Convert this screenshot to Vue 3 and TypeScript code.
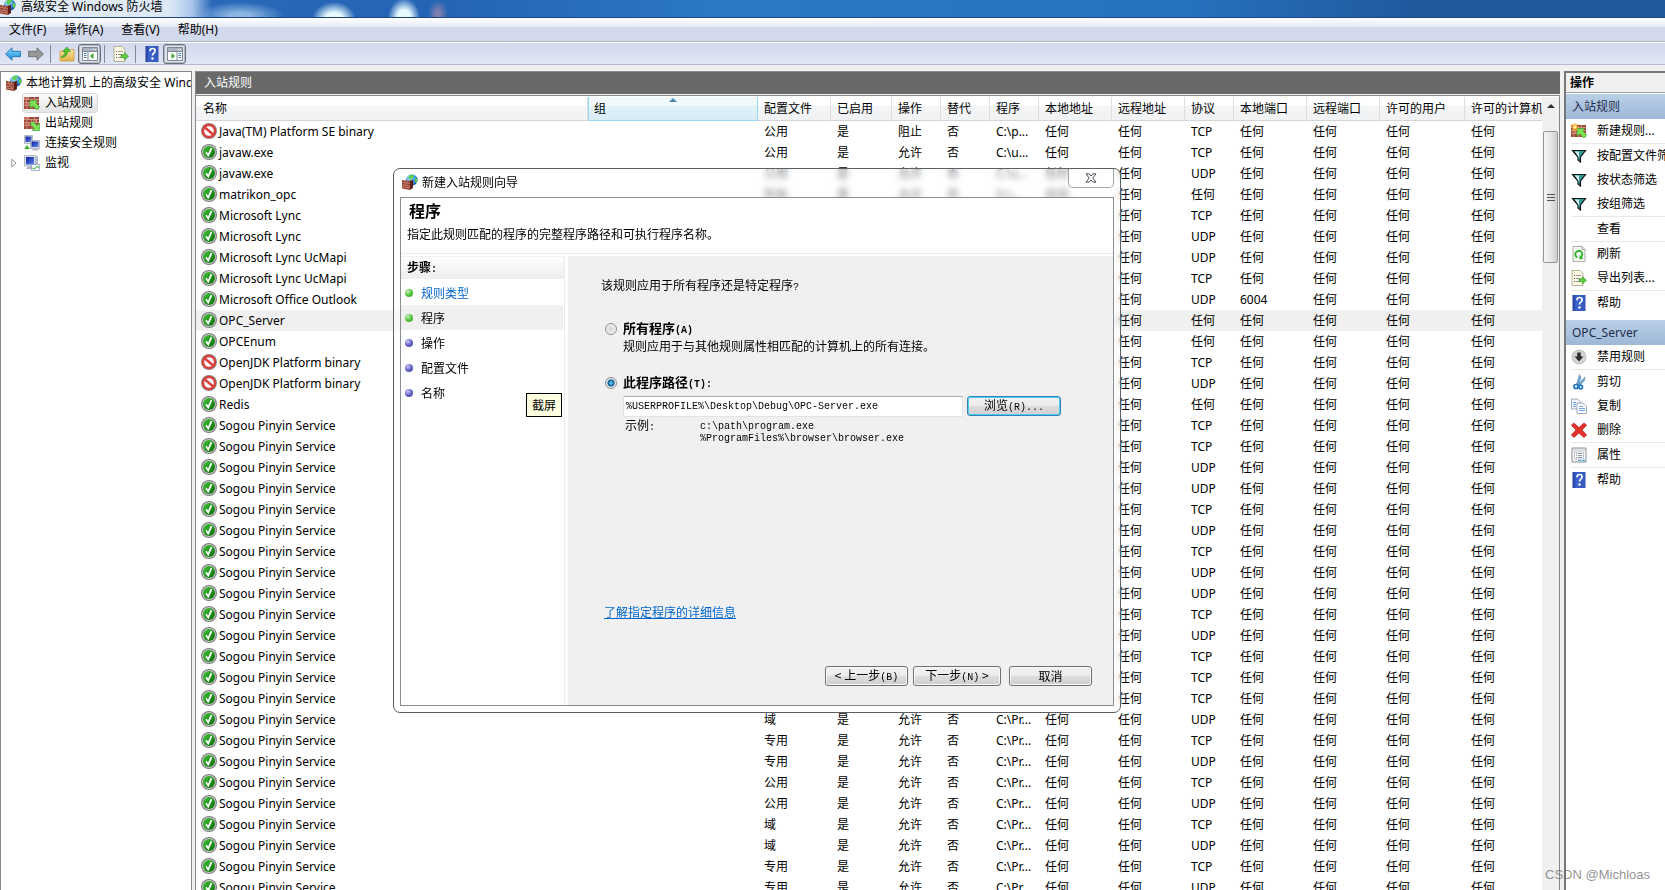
<script setup lang="ts">
import { ref } from 'vue'

interface Rule {
  name: string
  blocked?: boolean
  profile?: string
  action?: string
  program?: string
  protocol: string
  port?: string
}

const any = '任何'
const columns = [
  { label: '名称', cls: 'c-name' },
  { label: '组', cls: 'c-group' },
  { label: '配置文件', cls: 'c-73' },
  { label: '已启用', cls: 'c-61' },
  { label: '操作', cls: 'c-49' },
  { label: '替代', cls: 'c-49' },
  { label: '程序', cls: 'c-49' },
  { label: '本地地址', cls: 'c-73' },
  { label: '远程地址', cls: 'c-73' },
  { label: '协议', cls: 'c-49' },
  { label: '本地端口', cls: 'c-73' },
  { label: '远程端口', cls: 'c-73' },
  { label: '许可的用户', cls: 'c-85' },
  { label: '许可的计算机', cls: 'c-77' },
]

const sogou = (protocol: string, profile?: string): Rule => ({
  name: 'Sogou Pinyin Service',
  protocol,
  profile,
  action: profile ? '允许' : undefined,
  program: profile ? 'C:\\Pr...' : undefined,
})

const rules: Rule[] = [
  { name: 'Java(TM) Platform SE binary', blocked: true, profile: '公用', action: '阻止', program: 'C:\\p...', protocol: 'TCP' },
  { name: 'javaw.exe', profile: '公用', action: '允许', program: 'C:\\u...', protocol: 'TCP' },
  { name: 'javaw.exe', profile: '公用', action: '允许', program: 'C:\\u...', protocol: 'UDP' },
  { name: 'matrikon_opc', profile: '所有', action: '允许', program: 'D:\\...', protocol: any },
  { name: 'Microsoft Lync', protocol: 'TCP' },
  { name: 'Microsoft Lync', protocol: 'UDP' },
  { name: 'Microsoft Lync UcMapi', protocol: 'UDP' },
  { name: 'Microsoft Lync UcMapi', protocol: 'TCP' },
  { name: 'Microsoft Office Outlook', protocol: 'UDP', port: '6004' },
  { name: 'OPC_Server', protocol: any },
  { name: 'OPCEnum', protocol: any },
  { name: 'OpenJDK Platform binary', blocked: true, protocol: 'TCP' },
  { name: 'OpenJDK Platform binary', blocked: true, protocol: 'UDP' },
  { name: 'Redis', protocol: any },
  ...['TCP', 'TCP', 'UDP', 'UDP', 'TCP', 'UDP', 'TCP', 'UDP', 'UDP', 'TCP', 'UDP', 'TCP', 'TCP', 'TCP'].map((p) => sogou(p)),
  sogou('UDP', '域'),
  sogou('TCP', '专用'),
  sogou('UDP', '专用'),
  sogou('TCP', '公用'),
  sogou('UDP', '公用'),
  sogou('TCP', '域'),
  sogou('UDP', '域'),
  sogou('TCP', '专用'),
  sogou('UDP', '专用'),
]

const tree = [
  { label: '入站规则', icon: 'inbound', selected: true },
  { label: '出站规则', icon: 'outbound' },
  { label: '连接安全规则', icon: 'connsec' },
  { label: '监视', icon: 'monitor', expandable: true },
]

const actionGroups = [
  {
    title: '入站规则',
    items: [
      { label: '新建规则...', icon: 'newrule', sep: true },
      { label: '按配置文件筛选', icon: 'filter' },
      { label: '按状态筛选', icon: 'filter' },
      { label: '按组筛选', icon: 'filter', sep: true },
      { label: '查看', icon: '', sep: true },
      { label: '刷新', icon: 'refresh' },
      { label: '导出列表...', icon: 'export', sep: true },
      { label: '帮助', icon: 'help' },
    ],
  },
  {
    title: 'OPC_Server',
    items: [
      { label: '禁用规则', icon: 'disable', sep: true },
      { label: '剪切', icon: 'cut' },
      { label: '复制', icon: 'copy' },
      { label: '删除', icon: 'delete', sep: true },
      { label: '属性', icon: 'props', sep: true },
      { label: '帮助', icon: 'help' },
    ],
  },
]

const steps = [
  { label: '规则类型', done: true, link: true },
  { label: '程序', done: true, current: true },
  { label: '操作' },
  { label: '配置文件' },
  { label: '名称' },
]

const scope = ref('path')
const path = ref('%USERPROFILE%\\Desktop\\Debug\\OPC-Server.exe')
</script>

<template>
  <div class="window">
    <svg class="defs" aria-hidden="true">
      <defs>
        <linearGradient id="g-green" x1="0" y1="0" x2="1" y2="1"><stop offset="0" stop-color="#3fc43a" /><stop offset="1" stop-color="#0b6b06" /></linearGradient>
        <linearGradient id="g-folder" x1="0" y1="0" x2="0" y2="1"><stop offset="0" stop-color="#fbe6a4" /><stop offset="1" stop-color="#e2b145" /></linearGradient>
        <linearGradient id="g-blue" x1="0" y1="0" x2="0" y2="1"><stop offset="0" stop-color="#8fdcff" /><stop offset="1" stop-color="#1188d8" /></linearGradient>
        <linearGradient id="g-help" x1="0" y1="0" x2="1" y2="0"><stop offset="0" stop-color="#1f3f96" /><stop offset=".3" stop-color="#3a63cc" /><stop offset="1" stop-color="#3558bc" /></linearGradient>
        <radialGradient id="g-globe" cx=".35" cy=".3" r=".8"><stop offset="0" stop-color="#bff0ff" /><stop offset=".5" stop-color="#3f9be0" /><stop offset="1" stop-color="#123f9c" /></radialGradient>
        <linearGradient id="g-screen" x1="0" y1="0" x2="1" y2="1"><stop offset="0" stop-color="#0a1c9c" /><stop offset="1" stop-color="#5d86ee" /></linearGradient>
      </defs>
      <symbol id="i-firewall" viewBox="0 0 16 16">
        <circle cx="9.800" cy="6" r="5.800" fill="url(#g-globe)" />
        <path d="M7 1.500l3.500-1 1.500 2-2 1.500-1.500 2-2-1.500zM13 3.500l2.400 2-.5 3.500-2-1z" fill="#5fd048" />
        <path d="M0 6l8 1v9l-8-1.500z" fill="#93402f" />
        <path d="M8 7l3-1.500V14l-3 2z" fill="#5c2219" />
        <path d="M0 8.300l8 1.200M0 10.800l8 1.200M0 13l8 1.200M2.500 6.300v2.300M5.500 6.700v2.300M4 9v2.500M1.800 11.200v2.300M6 11.800V14" stroke="#d29484" stroke-width=".7" fill="none" />
      </symbol>
      <symbol id="i-bricks" viewBox="0 0 16 16">
        <path d="M0 2h15v12H0z" fill="#a14737" />
        <path d="M0 2h4v2H0zM9 5h4v2H9zM1 8h4v2H1z" fill="#c4705d" />
        <path d="M0 4.500h15M0 7.500h15M0 10.500h15M4.500 2v2.500M10.500 2v2.500M2.500 4.500v3M7.500 4.500v3M12.500 4.500v3M5 7.500v3M10 7.500v3M3 10.500V14M8 10.500V14" stroke="#e3b9aa" stroke-width=".6" fill="none" />
      </symbol>
      <symbol id="i-inbound" viewBox="0 0 16 16">
        <use href="#i-bricks" />
        <path d="M6 5.500h8l-2.200 2.200 4 4.300-3 3-4.200-4.200L6 13.300z" fill="#7be155" stroke="#2b9a2b" stroke-width=".6" />
      </symbol>
      <symbol id="i-outbound" viewBox="0 0 16 16">
        <use href="#i-bricks" />
        <path d="M15.700 15.500H8l2.200-2.200L6 9.200l3-3 4.200 4.200 2.500-2.500z" fill="#7be155" stroke="#2b9a2b" stroke-width=".6" />
      </symbol>
      <symbol id="i-newrule" viewBox="0 0 16 16">
        <use href="#i-inbound" />
        <path d="M4 0v8M0 4h8M1.200 1.200l5.600 5.600M6.800 1.200L1.200 6.800" stroke="#f7b52c" stroke-width="1.200" />
        <circle cx="4" cy="4" r="1.500" fill="#fff3a0" />
      </symbol>
      <symbol id="i-connsec" viewBox="0 0 16 16">
        <path d="M.5 .5h8v8h-8z" fill="#d9dde6" stroke="#8c93a5" stroke-width=".6" />
        <path d="M1.500 1.500h6v5.500h-6z" fill="url(#g-screen)" />
        <path d="M6.500 5.500h9v8h-9z" fill="#d9dde6" stroke="#8c93a5" stroke-width=".6" />
        <path d="M7.500 6.500h7v5.500h-7z" fill="url(#g-screen)" />
        <path d="M8 15.500l1-2h5l1 2z" fill="#b7bccb" />
        <path d="M0 14l3-4 3 4z" fill="#43b735" />
      </symbol>
      <symbol id="i-monitor" viewBox="0 0 16 16">
        <path d="M.5 .5h11v10.500H.5z" fill="#d9dde6" stroke="#8c93a5" stroke-width=".6" />
        <path d="M2 2h8v7.500H2z" fill="url(#g-screen)" />
        <path d="M2 14l2-2.500h5V14z" fill="#aab0c0" />
        <path d="M11.500 1H14v10h-2.500z" fill="#b8bed0" />
        <path d="M7.500 9.500h8v6h-8z" fill="#f5fbff" stroke="#7f9ab8" stroke-width=".7" />
        <path d="M8.500 13l2 1 2-2.500 2.500 1" stroke="#2aa82a" stroke-width="1" fill="none" />
      </symbol>
      <symbol id="i-allow" viewBox="0 0 16 16">
        <circle cx="8" cy="8" r="8" fill="#7d7d7d" />
        <circle cx="8" cy="8" r="6.900" fill="#c9c9c9" />
        <circle cx="8" cy="8" r="6" fill="url(#g-green)" />
        <path d="M5 8.300l2.200 3.200 3.300-7.300" stroke="#fff" stroke-width="1.800" fill="none" />
      </symbol>
      <symbol id="i-block" viewBox="0 0 16 16">
        <circle cx="8" cy="8" r="8" fill="#8f8585" />
        <circle cx="8" cy="8" r="7.200" fill="#d9403c" />
        <circle cx="8" cy="8" r="4.800" fill="#fff" />
        <path d="M3.800 4.500l8.400 7" stroke="#d9403c" stroke-width="2.500" />
      </symbol>
      <symbol id="i-filter" viewBox="0 0 16 16">
        <path d="M1.500 2.500h13L9.500 9v5L7 12V9z" fill="#2f9d9a" stroke="#111" stroke-width="1.200" />
        <path d="M4 3.500h4v7l-.8-2z" fill="#d7f3f3" />
      </symbol>
      <symbol id="i-refresh" viewBox="0 0 16 16">
        <path d="M2 .5h9l3 3v12H2z" fill="#f4f8f1" stroke="#9aa096" stroke-width=".8" />
        <path d="M11 .5v3h3" fill="none" stroke="#9aa096" stroke-width=".8" />
        <path d="M6.500 11.500A3.500 3.500 0 1 1 10 11" stroke="#2cb12c" stroke-width="1.800" fill="none" />
        <path d="M8.500 9v4.500l4-1z" fill="#2cb12c" />
      </symbol>
      <symbol id="i-export" viewBox="0 0 16 16">
        <path d="M1 .5h8l3 3v12H1z" fill="#fdf9e4" stroke="#a59f80" stroke-width=".8" />
        <path d="M3 5.500h1M3 8.500h1M3 11.500h1" stroke="#555" />
        <path d="M5 5.500h5M5 8.500h4M5 11.500h4" stroke="#9a9a9a" />
        <path d="M8 8.700h3.500V6.500l4 3.800-4 3.700v-2.200H8z" fill="#62cc3f" stroke="#349226" stroke-width=".6" />
      </symbol>
      <symbol id="i-help" viewBox="0 0 16 16">
        <path d="M1.500 0h13v16h-13z" fill="url(#g-help)" />
        <path d="M6 5.200q0-2.700 2.600-2.700 2.500 0 2.500 2.300 0 1.400-1.500 2.400-1.100.8-1.100 2.300" stroke="#fff" stroke-width="1.700" fill="none" />
        <circle cx="8.500" cy="12.500" r="1.200" fill="#fff" />
      </symbol>
      <symbol id="i-disable" viewBox="0 0 16 16">
        <circle cx="8" cy="8" r="7" fill="#d4d4d4" stroke="#aaa" stroke-width=".7" />
        <path d="M6.200 3.500h3.600v4h2.700L8 12.500 3.500 7.500h2.700z" fill="#2d2d2d" />
      </symbol>
      <symbol id="i-cut" viewBox="0 0 16 16">
        <path d="M5.500 10L8.500 .5l1.500 3L7.500 10.500zM7 10.500L14 3l-.5 3.500-5 5z" fill="#6ea5d2" stroke="#4d7fa8" stroke-width=".5" />
        <circle cx="5" cy="12.500" r="2" fill="none" stroke="#1c74c4" stroke-width="1.700" />
        <circle cx="9.700" cy="13" r="1.800" fill="none" stroke="#1c74c4" stroke-width="1.700" />
      </symbol>
      <symbol id="i-copy" viewBox="0 0 16 16">
        <path d="M.5 1h6l3 3v7h-9z" fill="#f3f7fc" stroke="#7d94b5" stroke-width=".8" />
        <path d="M6 5h6l3.500 3v7.500H6z" fill="#fff" stroke="#7d94b5" stroke-width=".8" />
        <path d="M2 4.500h3M2 6.500h3M2 8.500h3M8 8.500h4M8 10.500h6M8 12.500h6" stroke="#6fa0d8" />
      </symbol>
      <symbol id="i-delete" viewBox="0 0 16 16">
        <path d="M2.800 1L8 5.500 13 1l2.700 2.200L11 8l4.700 5-2.800 2.500L8 11l-5 4.500L.3 13 5 8 .3 3.300z" fill="#e5302b" stroke="#a8130f" stroke-width=".6" />
      </symbol>
      <symbol id="i-props" viewBox="0 0 16 16">
        <path d="M1 1h14v14H1z" fill="#f5f5f5" stroke="#8a8f96" />
        <path d="M2 3h12" stroke="#c3c8d0" />
        <path d="M3.500 5h9v7h-9z" fill="#fff" stroke="#a7adb5" stroke-width=".7" />
        <path d="M5 6.500h1M5 8.500h1M5 10.500h1M7 6.500h4M7 8.500h4M7 10.500h4" stroke="#8c98a8" />
        <path d="M7 13.500h3M11 13.500h3" stroke="#38a8dc" />
      </symbol>
      <symbol id="i-back" viewBox="0 0 16 16">
        <path d="M.6 8L7 1.800v3.500h8.400v5.400H7v3.500z" fill="url(#g-blue)" stroke="#1b6fb3" stroke-width=".9" />
      </symbol>
      <symbol id="i-forward" viewBox="0 0 16 16">
        <path d="M15.400 8L9 1.800v3.500H.6v5.400H9v3.500z" fill="#989898" stroke="#6d6d6d" stroke-width=".9" />
      </symbol>
      <symbol id="i-up" viewBox="0 0 16 16">
        <path d="M1 5h7l1.500-1.500H15V15H1z" fill="url(#g-folder)" stroke="#c59a3d" stroke-width=".7" />
        <path d="M2.500 10.500q3.500-.5 3.500-5H3.800L7.800 1l3.700 4.500H8.700q-.5 5.500-6.200 6z" fill="#4ec42f" stroke="#2b8a1c" stroke-width=".6" />
      </symbol>
      <symbol id="i-panel-left" viewBox="0 0 16 16">
        <path d="M.5 1.500h15v13H.5z" fill="#fff" stroke="#7f8896" />
        <path d="M1 2h14v3H1z" fill="#a9b3c2" />
        <path d="M11 3.500h1M13 3.500h1" stroke="#fff" />
        <path d="M6 5.500v9M.5 5.500h15" stroke="#7f8896" />
        <path d="M2 7.500h2.500M2 9.500h2.500M2 11.500h2.500" stroke="#4a7ec0" />
        <path d="M11.500 7v6L8 10z" fill="#34a52a" />
      </symbol>
      <symbol id="i-panel-right" viewBox="0 0 16 16">
        <path d="M.5 1.500h15v13H.5z" fill="#fff" stroke="#7f8896" />
        <path d="M1 2h14v3H1z" fill="#a9b3c2" />
        <path d="M11 3.500h1M13 3.500h1" stroke="#fff" />
        <path d="M10 5.500v9M.5 5.500h15" stroke="#7f8896" />
        <path d="M11.500 7.500H14M11.500 9.500H14M11.500 11.500H14" stroke="#4a7ec0" />
        <path d="M4.500 7v6L8 10z" fill="#34a52a" />
      </symbol>
    </svg>

    <header class="titlebar">
      <svg class="ico"><use href="#i-firewall" /></svg>
      <span>高级安全 Windows 防火墙</span>
    </header>

    <nav class="menubar">
      <button type="button">文件(F)</button>
      <button type="button">操作(A)</button>
      <button type="button">查看(V)</button>
      <button type="button">帮助(H)</button>
    </nav>

    <div class="toolbar">
      <button type="button" aria-label="后退"><svg class="ico"><use href="#i-back" /></svg></button>
      <button type="button" aria-label="前进"><svg class="ico"><use href="#i-forward" /></svg></button>
      <i class="bar"></i>
      <button type="button" aria-label="向上"><svg class="ico"><use href="#i-up" /></svg></button>
      <button type="button" class="pressed" aria-label="控制台树"><svg class="ico"><use href="#i-panel-left" /></svg></button>
      <i class="bar"></i>
      <button type="button" aria-label="导出列表"><svg class="ico"><use href="#i-export" /></svg></button>
      <i class="bar"></i>
      <button type="button" aria-label="帮助"><svg class="ico"><use href="#i-help" /></svg></button>
      <button type="button" class="pressed" aria-label="操作窗格"><svg class="ico"><use href="#i-panel-right" /></svg></button>
    </div>

    <main class="panes">
      <aside class="tree">
        <div class="node root"><svg class="ico"><use href="#i-firewall" /></svg><span>本地计算机 上的高级安全 Windows 防火墙</span></div>
        <div v-for="n in tree" :key="n.label" class="node child">
          <span class="twist"><svg v-if="n.expandable" viewBox="0 0 6 10"><path d="M.8 1.200L5 5 .8 8.800z" fill="#fff" stroke="#999" /></svg></span>
          <span class="pick" :class="{ selected: n.selected }"><svg class="ico"><use :href="'#i-' + n.icon" /></svg>{{ n.label }}</span>
        </div>
      </aside>

      <section class="center">
        <h1 class="caption">入站规则</h1>
        <div class="list">
          <div class="list-view">
            <table>
              <colgroup><col v-for="(c, i) in columns" :key="i" :class="c.cls" /></colgroup>
              <thead>
                <tr>
                  <th v-for="c in columns" :key="c.label" scope="col" :class="{ sorted: c.label === '组' }">{{ c.label }}<i v-if="c.label === '组'" class="sort"></i></th>
                </tr>
              </thead>
              <tbody>
                <tr v-for="(r, i) in rules" :key="i" :class="{ current: r.name === 'OPC_Server' }">
                  <td class="name"><svg class="ico"><use :href="r.blocked ? '#i-block' : '#i-allow'" /></svg>{{ r.name }}</td>
                  <td></td>
                  <td>{{ r.profile }}</td>
                  <td>{{ r.profile ? '是' : '' }}</td>
                  <td>{{ r.action }}</td>
                  <td>{{ r.profile ? '否' : '' }}</td>
                  <td>{{ r.program }}</td>
                  <td>{{ r.profile ? any : '' }}</td>
                  <td>{{ any }}</td>
                  <td>{{ r.protocol }}</td>
                  <td>{{ r.port ?? any }}</td>
                  <td>{{ any }}</td>
                  <td>{{ any }}</td>
                  <td>{{ any }}</td>
                </tr>
              </tbody>
            </table>
          </div>
          <div class="scroll">
            <button type="button" class="arrow" aria-label="向上滚动"></button>
            <div class="thumb"><i></i><i></i><i></i></div>
          </div>
        </div>
      </section>

      <aside class="actions">
        <h2>操作</h2>
        <section v-for="g in actionGroups" :key="g.title">
          <h3>{{ g.title }}</h3>
          <ul>
            <li v-for="a in g.items" :key="a.label" :class="{ sep: a.sep }">
              <button type="button"><svg class="ico"><use v-if="a.icon" :href="'#i-' + a.icon" /></svg>{{ a.label }}</button>
            </li>
          </ul>
        </section>
      </aside>
    </main>

    <div class="dialog" role="dialog" aria-labelledby="wizard-title">
      <div class="dialog-bar">
        <svg class="ico"><use href="#i-firewall" /></svg>
        <span id="wizard-title">新建入站规则向导</span>
        <button type="button" class="close" aria-label="关闭">
          <svg viewBox="0 0 12 10"><path d="M1 .8h3L6 3l2-2.200h3L7.800 5 11 9.200H8L6 7 4 9.200H1L4.200 5z" fill="#fff" stroke="#4a4a58" /></svg>
        </button>
      </div>
      <div class="dialog-body">
        <div class="intro">
          <h2>程序</h2>
          <p>指定此规则匹配的程序的完整程序路径和可执行程序名称。</p>
        </div>
        <div class="split">
          <div class="steps">
            <h3>步骤<span class="lat">:</span></h3>
            <ol>
              <li v-for="s in steps" :key="s.label" :class="{ now: s.current }">
                <i class="dot" :class="{ done: s.done }"></i>
                <a v-if="s.link" href="#">{{ s.label }}</a>
                <span v-else>{{ s.label }}</span>
              </li>
            </ol>
          </div>
          <form class="page" @submit.prevent>
            <p class="question">该规则应用于所有程序还是特定程序<span class="lat">?</span></p>

            <div class="option">
              <input id="opt-all" v-model="scope" type="radio" name="scope" value="all" />
              <label for="opt-all">所有程序<span class="lat">(A)</span></label>
            </div>
            <p class="hint">规则应用于与其他规则属性相匹配的计算机上的所有连接。</p>

            <div class="option second">
              <input id="opt-path" v-model="scope" type="radio" name="scope" value="path" />
              <label for="opt-path">此程序路径<span class="lat">(T):</span></label>
            </div>
            <div class="path-row">
              <input v-model="path" type="text" class="path" aria-label="此程序路径" />
              <button type="button" class="btn focus">浏览<span class="lat">(R)...</span></button>
            </div>
            <div class="example">
              <span>示例<span class="lat">:</span></span>
              <div class="lat">c:\path\program.exe<br />%ProgramFiles%\browser\browser.exe</div>
            </div>

            <a class="more" href="#">了解指定程序的详细信息</a>

            <div class="footer">
              <button type="button" class="btn">&lt; 上一步<span class="lat">(B)</span></button>
              <button type="button" class="btn next">下一步<span class="lat">(N)</span> &gt;</button>
              <button type="button" class="btn cancel">取消</button>
            </div>
          </form>
        </div>
      </div>
      <div class="tip" role="tooltip">截屏</div>
    </div>

    <div class="watermark">CSDN @Michloas</div>
  </div>
</template>

<style>
body {
  overflow: hidden;
}
</style>

<style scoped>
.window {
  position: relative;
  display: flex;
  flex-direction: column;
  height: 100vh;
  overflow: hidden;
  background: #f0f0f0;
  color: #000;
  font: 12px/20px "Noto Sans", "Noto Sans CJK SC", sans-serif;
}
.window * {
  box-sizing: border-box;
}
h1, h2, h3, p, ul, ol {
  margin: 0;
  padding: 0;
  font-size: 12px;
  list-style: none;
}
button {
  margin: 0;
  padding: 0;
  border: 0;
  background: none;
  color: inherit;
  font: inherit;
}
.defs {
  position: absolute;
  width: 0;
  height: 0;
}
.ico {
  flex: none;
  width: 16px;
  height: 16px;
}

.titlebar {
  display: flex;
  flex: none;
  align-items: center;
  gap: 5px;
  height: 18px;
  padding-bottom: 4px;
  border-bottom: 1px solid #1c4683;
  background:
    radial-gradient(ellipse 22px 18px at 334px 20px, #e8fbff 40%, transparent),
    radial-gradient(ellipse 16px 20px at 404px 18px, #e8fbff 40%, transparent),
    radial-gradient(ellipse 10px 14px at 438px 14px, #7c7fae 20%, transparent),
    radial-gradient(ellipse 44px 14px at 240px 16px, #8db8e4 20%, transparent),
    linear-gradient(90deg, #e4edf8 0, #dce8f6 170px, #a9c6ea 192px, #2a68b8 212px, #2464b4 440px, #2b78c6 720px, #2672be 1180px, #1f599c 1420px, #205a9a 100%);
}
.menubar {
  display: flex;
  flex: none;
  gap: 2px;
  height: 24px;
  padding-left: 1px;
  border-bottom: 1px solid #b1b5c4;
  background: linear-gradient(#fff, #e6eaf5 9px, #d3d9ec 9px);
}
.menubar button {
  padding: 0 8px;
}
.toolbar {
  display: flex;
  flex: none;
  align-items: center;
  height: 23px;
  padding-left: 1px;
  border-top: 1px solid #fff;
  border-bottom: 1px solid #b3bad0;
  background: linear-gradient(#d3d9ec, #e0e6f5);
}
.toolbar button {
  display: flex;
  align-items: center;
  justify-content: center;
  width: 23px;
  height: 20px;
}
.toolbar .pressed {
  border: 1px solid #6b6f79;
  border-radius: 3px;
  background: #dde1ea;
  box-shadow: inset 0 0 0 1px #b6bac5;
}
.bar {
  width: 1px;
  height: 18px;
  margin: 0 4px 0 3px;
  background: #85888f;
}

.panes {
  display: flex;
  flex: 1;
  gap: 3px;
  min-height: 0;
  padding-top: 6px;
}
.tree {
  flex: none;
  width: 192px;
  padding-top: 1px;
  overflow: hidden;
  border: 1px solid #828790;
  border-bottom: 0;
  background: #fff;
}
.node {
  display: flex;
  align-items: center;
  height: 20px;
  white-space: nowrap;
}
.root {
  gap: 4px;
  padding-left: 5px;
}
.root span {
  min-width: 0;
  overflow: hidden;
}
.twist {
  display: flex;
  justify-content: flex-end;
  width: 21px;
  padding-right: 5px;
}
.twist svg {
  width: 6px;
  height: 10px;
}
.pick {
  display: flex;
  align-items: center;
  gap: 5px;
  height: 20px;
  padding: 0 4px 0 1px;
  border: 1px solid transparent;
  border-radius: 3px;
}
.pick.selected {
  border-color: #d9d9d9;
  background: linear-gradient(#fafafa, #e5e5e5);
}

.center {
  display: flex;
  flex: 1;
  flex-direction: column;
  min-width: 0;
  border-left: 1px solid #828790;
}
.caption {
  flex: none;
  height: 23px;
  padding-left: 8px;
  border-top: 1px solid #8b8b8b;
  background: #696969;
  color: #fff;
  font-weight: 400;
  line-height: 22px;
}
.list {
  display: flex;
  flex: 1;
  min-height: 0;
  margin-top: 1px;
  padding-top: 1px;
  border-top: 1px solid #828790;
  border-right: 1px solid #828790;
  background: #fff;
}
.list-view {
  flex: 1;
  overflow: hidden;
}
table {
  width: 100%;
  border-collapse: separate;
  border-spacing: 0;
  table-layout: fixed;
}
.c-name { width: auto; }
.c-group { width: 170px; }
.c-73 { width: 73px; }
.c-61 { width: 61px; }
.c-49 { width: 49px; }
.c-85 { width: 85px; }
.c-77 { width: 77px; }
th, td {
  padding: 0 0 0 6px;
  overflow: hidden;
  font-weight: 400;
  text-align: left;
  white-space: nowrap;
}
th {
  position: relative;
  height: 24px;
  border-right: 1px solid #dedfe1;
  border-bottom: 1px solid #d5d5d5;
  background: linear-gradient(#fff 9px, #f4f5f7 9px, #f1f2f4);
  line-height: 22px;
}
th:first-child {
  padding-left: 7px;
}
th:last-child {
  border-right: 0;
}
th.sorted {
  border-right-color: #96d9f9;
  border-bottom-color: #96d9f9;
  background: linear-gradient(#f2f9fc 9px, #e1f1f9 9px, #d8ecf6);
  box-shadow: inset 1px 0 #96d9f9;
}
.sort {
  position: absolute;
  top: 1px;
  left: 50%;
  width: 0;
  margin-left: -4px;
  border: 4px solid transparent;
  border-top: 0;
  border-bottom-color: #4c8ab0;
}
td {
  height: 21px;
  line-height: 21px;
}
.name {
  padding-left: 5px;
}
.name .ico {
  margin-right: 2px;
  vertical-align: -3px;
}
.current td {
  background: #f0f0f0;
}
.scroll {
  flex: none;
  width: 17px;
  background: #f0f0f0;
}
.arrow {
  display: flex;
  align-items: center;
  justify-content: center;
  width: 17px;
  height: 17px;
}
.arrow::before {
  border: 4px solid transparent;
  border-top: 0;
  border-bottom-color: #333;
  content: "";
}
.thumb {
  display: flex;
  flex-direction: column;
  gap: 2px;
  align-items: center;
  justify-content: center;
  width: 15px;
  height: 132px;
  margin: 17px 1px 0;
  border: 1px solid #979797;
  border-radius: 2px;
  background: linear-gradient(90deg, #f5f5f5, #e6e6e6 50%, #cfcfcf);
}
.thumb i {
  width: 8px;
  height: 1px;
  background: #555;
}

.actions {
  flex: none;
  width: 101px;
  margin-left: 1px;
  overflow: hidden;
  border-top: 2px solid #777;
  border-left: 2px solid #777;
  background: #fff;
  white-space: nowrap;
}
.actions h2 {
  height: 20px;
  padding-left: 4px;
  border-bottom: 1px solid #a0a0a0;
  background: #f0f0f0;
  line-height: 20px;
}
.actions h3 {
  height: 25px;
  margin-top: 5px;
  padding-left: 6px;
  background: linear-gradient(#bad0e8, #9db7d6);
  color: #1e2c4c;
  font-weight: 400;
  line-height: 26px;
}
.actions section:first-of-type h3 {
  margin-top: 1px;
}
.actions li {
  margin-left: 5px;
}
.actions .sep {
  border-bottom: 1px solid #e8e8e8;
}
.actions button {
  display: flex;
  align-items: center;
  gap: 10px;
  height: 24px;
}

.dialog {
  position: absolute;
  top: 168px;
  left: 393px;
  width: 728px;
  padding: 0 6px 6px;
  border: 1px solid #5c5f62;
  border-radius: 7px;
  background: rgba(255, 255, 255, .45);
  backdrop-filter: blur(3px);
  font-family: "Noto Sans CJK SC", sans-serif;
  line-height: 16px;
}
.lat {
  font-family: "Liberation Mono", monospace;
  font-size: 10px;
}
.dialog-bar {
  display: flex;
  align-items: center;
  gap: 4px;
  height: 28px;
  padding: 0 0 2px 2px;
}
.close {
  display: flex;
  align-items: center;
  align-self: flex-start;
  justify-content: center;
  width: 46px;
  height: 19px;
  margin-left: auto;
  border: 1px solid #a3a6a9;
  border-top: 0;
  border-radius: 0 0 5px 5px;
  background: #fff;
}
.close svg {
  width: 12px;
  height: 10px;
}
.dialog-body {
  border: 1px solid #8b8e91;
  background: #fff;
}
.intro {
  height: 56px;
  padding: 2px 0 0 6px;
  border-bottom: 1px solid #ececec;
}
.intro h2 {
  padding-left: 2px;
  font-size: 16px;
  line-height: 20px;
}
.intro p {
  margin-top: 6px;
}
.split {
  display: flex;
  height: 451px;
  padding-top: 2px;
}
.steps {
  width: 164px;
  border-right: 1px solid #ececec;
}
.steps h3 {
  height: 23px;
  margin-bottom: 1px;
  padding-left: 6px;
  border-top: 1px solid #f0f0f0;
  background: linear-gradient(#fdfdfd, #ededed);
  line-height: 20px;
}
.steps li {
  display: flex;
  align-items: center;
  gap: 8px;
  height: 25px;
  margin-right: 1px;
  padding-left: 4px;
}
.now {
  background: #f0f0f0;
}
.dot {
  width: 8px;
  height: 8px;
  border-radius: 4px;
  background: radial-gradient(circle at 35% 30%, #c9c9f2, #6562c8 50%, #4340a0);
}
.dot.done {
  background: radial-gradient(circle at 35% 30%, #c8f2bd, #55c43c 50%, #35a024);
}
a {
  color: #0066cc;
  text-decoration: none;
}
.page {
  display: flex;
  flex: 1;
  flex-direction: column;
  margin-left: 3px;
  padding: 21px 21px 19px 33px;
  background: #f0f0f0;
}
.option {
  display: flex;
  align-items: center;
  gap: 6px;
  height: 18px;
  margin-top: 24px;
  padding-left: 4px;
}
.option label {
  font-size: 13px;
  font-weight: 700;
}
.option.second {
  margin-top: 20px;
}
.option input {
  width: 12px;
  height: 12px;
  margin: 0;
  border: 1px solid #8e8f8f;
  border-radius: 6px;
  appearance: none;
  background: radial-gradient(circle, #d4d4d4, #fafafa);
}
.option input:checked {
  background: radial-gradient(circle, #4fc0ee 1px, #0d4c86 3px, #dfe7ee 4px);
}
.hint {
  margin-left: 22px;
}
.path-row {
  display: flex;
  gap: 4px;
  margin: 4px 31px 0 22px;
}
.path {
  flex: 1;
  min-width: 0;
  height: 21px;
  padding: 0 2px;
  border: 1px solid #e2e3ea;
  border-top-color: #abadb3;
  background: #fff;
  color: #000;
  font: 10px "Liberation Mono", monospace;
}
.btn {
  width: 83px;
  height: 20px;
  border: 1px solid #707070;
  border-radius: 3px;
  background: linear-gradient(#f2f2f2, #ebebeb 9px, #dddddd 9px, #cfcfcf);
  box-shadow: inset 0 0 0 1px #f8f8f8;
  line-height: 16px;
  white-space: nowrap;
}
.btn.focus {
  width: 94px;
  border-color: #3c7fb1;
  box-shadow: inset 0 0 0 1px #46d0f5;
}
.example {
  display: flex;
  margin-left: 24px;
}
.example > span {
  width: 75px;
}
.example .lat {
  padding-top: 4px;
  line-height: 12px;
}
.more {
  align-self: flex-start;
  margin: auto 0 46px 3px;
  text-decoration: underline;
}
.footer {
  display: flex;
  gap: 5px;
  justify-content: flex-end;
}
.next {
  width: 88px;
}
.cancel {
  margin-left: 3px;
}
.tip {
  position: absolute;
  top: 224px;
  left: 132px;
  padding: 3px 5px;
  border: 1px solid #000;
  background: #ffffe1;
}
.watermark {
  position: absolute;
  right: 15px;
  bottom: 6px;
  color: rgba(110, 110, 110, .75);
  font: 13px/18px "Liberation Sans", sans-serif;
}
</style>
